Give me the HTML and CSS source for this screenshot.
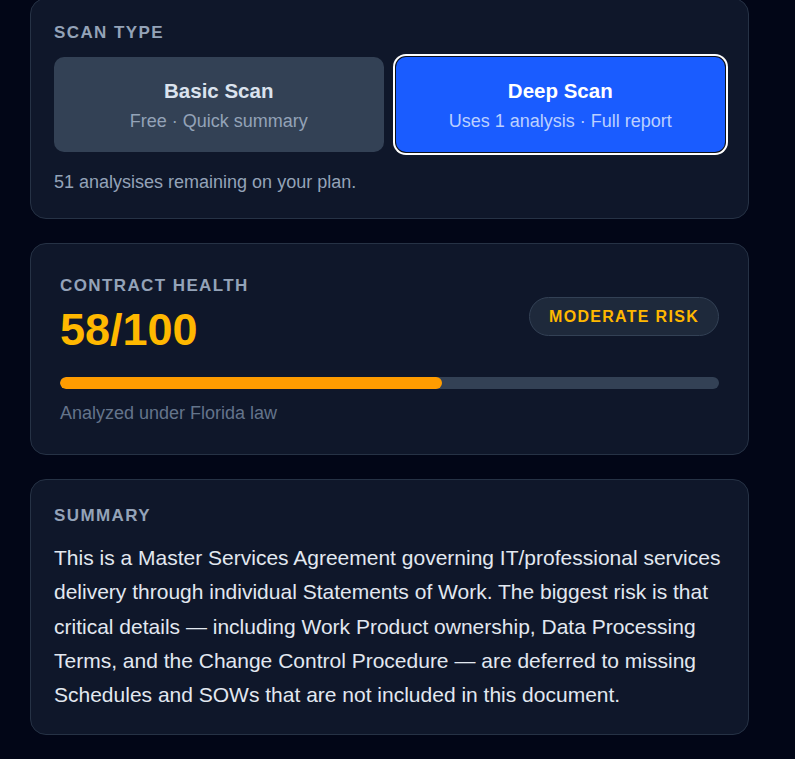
FILE: index.html
```html
<!DOCTYPE html>
<html lang="en">
<head>
<meta charset="utf-8">
<title>Contract Scan</title>
<link rel="stylesheet" href="styles.css">
</head>
<body>
<main class="page">
  <section class="card card-scan">
    <h2 class="label">Scan Type</h2>
    <div class="scan-options">
      <button class="scan-option">
        <span class="scan-title">Basic Scan</span>
        <span class="scan-sub">Free · Quick summary</span>
      </button>
      <button class="scan-option is-active">
        <span class="scan-title">Deep Scan</span>
        <span class="scan-sub">Uses 1 analysis · Full report</span>
      </button>
    </div>
    <p class="remaining">51 analysises remaining on your plan.</p>
  </section>

  <section class="card card-health">
    <div class="health-head">
      <div class="health-score">
        <h2 class="label">Contract Health</h2>
        <div class="score">58/100</div>
      </div>
      <span class="risk-pill">MODERATE RISK</span>
    </div>
    <div class="bar"><div class="bar-fill" style="width:58%"></div></div>
    <p class="jurisdiction">Analyzed under Florida law</p>
  </section>

  <section class="card card-summary">
    <h2 class="label">Summary</h2>
    <p class="summary-text">This is a Master Services Agreement governing IT/professional services delivery through individual Statements of Work. The biggest risk is that critical details — including Work Product ownership, Data Processing Terms, and the Change Control Procedure — are deferred to missing Schedules and SOWs that are not included in this document.</p>
  </section>
</main>
</body>
</html>
```

FILE: styles.css
```css
* { box-sizing: border-box; }

html, body {
  margin: 0;
  background: #020617;
}

body {
  font-family: "Liberation Sans", Arial, sans-serif;
  color: #e2e8f0;
}

.page {
  margin-top: -2px;
  padding-left: 30px;
  display: flex;
  flex-direction: column;
  gap: 24px;
  width: 749px;
}

.card {
  width: 719px;
  background: #0f172a;
  border: 1px solid #263245;
  border-radius: 16px;
}

.label {
  margin: 0;
  font-size: 17px;
  line-height: 20px;
  font-weight: 700;
  letter-spacing: 1.4px;
  text-transform: uppercase;
  color: #94a3b8;
}

/* Scan type */
.card-scan {
  height: 221px;
  padding: 24px 23px 0 23px;
}

.card-scan .label { margin-bottom: 14px; }

.scan-options {
  display: grid;
  grid-template-columns: 1fr 1fr;
  gap: 12px;
}

.scan-option {
  display: flex;
  flex-direction: column;
  align-items: center;
  gap: 8px;
  height: 95px;
  padding: 22px 12px 0;
  border: 0;
  border-radius: 10px;
  background: #334155;
  font-family: inherit;
  cursor: pointer;
}

.scan-title {
  font-size: 20.5px;
  line-height: 24px;
  font-weight: 700;
  color: #dbe3ee;
}

.scan-sub {
  font-size: 18px;
  line-height: 21px;
  color: #94a3b8;
}

.scan-option.is-active {
  background: #1a5cff;
  box-shadow: 0 0 0 1px #0b0f17, 0 0 0 3px #ffffff;
}

.scan-option.is-active .scan-title { color: #ffffff; }
.scan-option.is-active .scan-sub { color: #bcd0ff; }

.remaining {
  margin: 17px 0 0;
  font-size: 18px;
  line-height: 27px;
  color: #94a3b8;
}

/* Health */
.card-health {
  height: 212px;
  padding: 32px 29px 0 29px;
}

.health-head {
  display: flex;
  justify-content: space-between;
  align-items: center;
}

.health-score .label { margin-bottom: 10px; }

.score {
  font-size: 45px;
  line-height: 48px;
  font-weight: 700;
  color: #ffb800;
}

.risk-pill {
  padding: 10px 19px;
  border: 1px solid #334155;
  border-radius: 999px;
  background: #1e293b;
  color: #ffb800;
  font-size: 16px;
  line-height: 17px;
  font-weight: 700;
  letter-spacing: 1.3px;
  margin-top: 2px;
}

.bar {
  margin-top: 23px;
  height: 12px;
  border-radius: 6px;
  background: #334155;
  overflow: hidden;
}

.bar-fill {
  height: 100%;
  border-radius: 6px;
  background: #ff9c00;
}

.jurisdiction {
  margin: 11px 0 0;
  font-size: 18px;
  line-height: 27px;
  color: #64748b;
}

/* Summary */
.card-summary {
  height: 256px;
  padding: 26px 23px 0 23px;
}

.card-summary .label { margin-bottom: 15px; }

.summary-text {
  margin: 0;
  font-size: 21px;
  line-height: 34.25px;
  color: #e2e8f0;
}
```
